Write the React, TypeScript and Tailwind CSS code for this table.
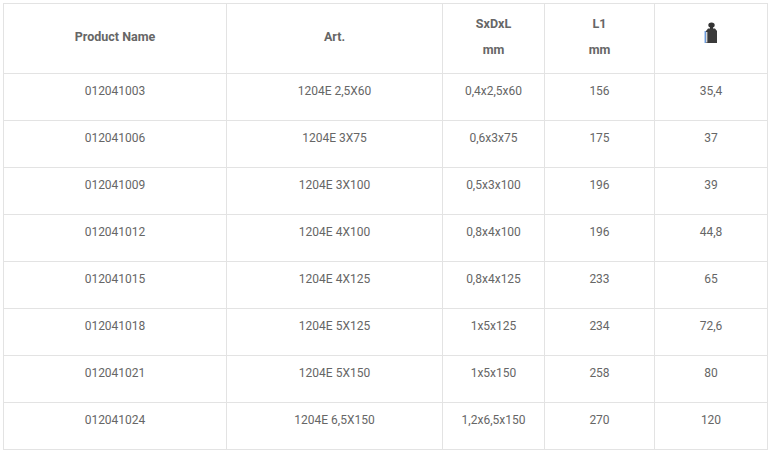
import React from "react";

const rows = [
  ["012041003", "1204E 2,5X60", "0,4x2,5x60", "156", "35,4"],
  ["012041006", "1204E 3X75", "0,6x3x75", "175", "37"],
  ["012041009", "1204E 3X100", "0,5x3x100", "196", "39"],
  ["012041012", "1204E 4X100", "0,8x4x100", "196", "44,8"],
  ["012041015", "1204E 4X125", "0,8x4x125", "233", "65"],
  ["012041018", "1204E 5X125", "1x5x125", "234", "72,6"],
  ["012041021", "1204E 5X150", "1x5x150", "258", "80"],
  ["012041024", "1204E 6,5X150", "1,2x6,5x150", "270", "120"],
];

function WeightIcon() {
  return (
    <svg width="16" height="22" viewBox="0 0 16 22" className="block">
      <ellipse cx="8.5" cy="3" rx="3.2" ry="2.6" fill="#333" />
      <rect x="7" y="4.5" width="3" height="2.5" fill="#333" />
      <path d="M3 9 L5 6.5 L12 6.5 L14 9 L14 21 L3 21 Z" fill="#3a3a3a" />
      <rect x="1.6" y="9" width="1.3" height="12" fill="#5b8fd6" />
      <rect x="3.2" y="10" width="1.1" height="10.5" fill="#ffffff" />
    </svg>
  );
}

export default function App() {
  return (
    <div className="bg-white w-[771px] h-[452px] p-[3px]">
      <table
        className="table-fixed border-collapse w-[764px] text-[12px] text-[#666666]"
        style={{ fontFamily: "Roboto, 'Open Sans', sans-serif" }}
      >
        <colgroup>
          <col className="w-[223px]" />
          <col className="w-[216px]" />
          <col className="w-[102px]" />
          <col className="w-[110px]" />
          <col className="w-[113px]" />
        </colgroup>
        <thead>
          <tr className="h-[70px]">
            <th className="border border-[#e3e3e3] align-middle text-center font-bold text-[12.5px] text-[#666666] leading-[26px] pb-[4px]">
              Product Name
            </th>
            <th className="border border-[#e3e3e3] align-middle text-center font-bold text-[12.5px] text-[#666666] leading-[26px] pb-[4px]">
              Art.
            </th>
            <th className="border border-[#e3e3e3] align-middle text-center font-bold text-[12.5px] text-[#666666] leading-[26px] pb-[4px]">
              <div>SxDxL</div>
              <div>mm</div>
            </th>
            <th className="border border-[#e3e3e3] align-middle text-center font-bold text-[12.5px] text-[#666666] leading-[26px] pb-[4px]">
              <div>L1</div>
              <div>mm</div>
            </th>
            <th className="border border-[#e3e3e3] align-middle text-center pb-[11px]">
              <div className="flex justify-center">
                <WeightIcon />
              </div>
            </th>
          </tr>
        </thead>
        <tbody>
          {rows.map((r) => (
            <tr key={r[0]} className="h-[47px]">
              {r.map((c, i) => (
                <td
                  key={i}
                  className="border border-[#e3e3e3] align-top text-center pt-[8px] leading-[18px]"
                >
                  {c}
                </td>
              ))}
            </tr>
          ))}
        </tbody>
      </table>
    </div>
  );
}
